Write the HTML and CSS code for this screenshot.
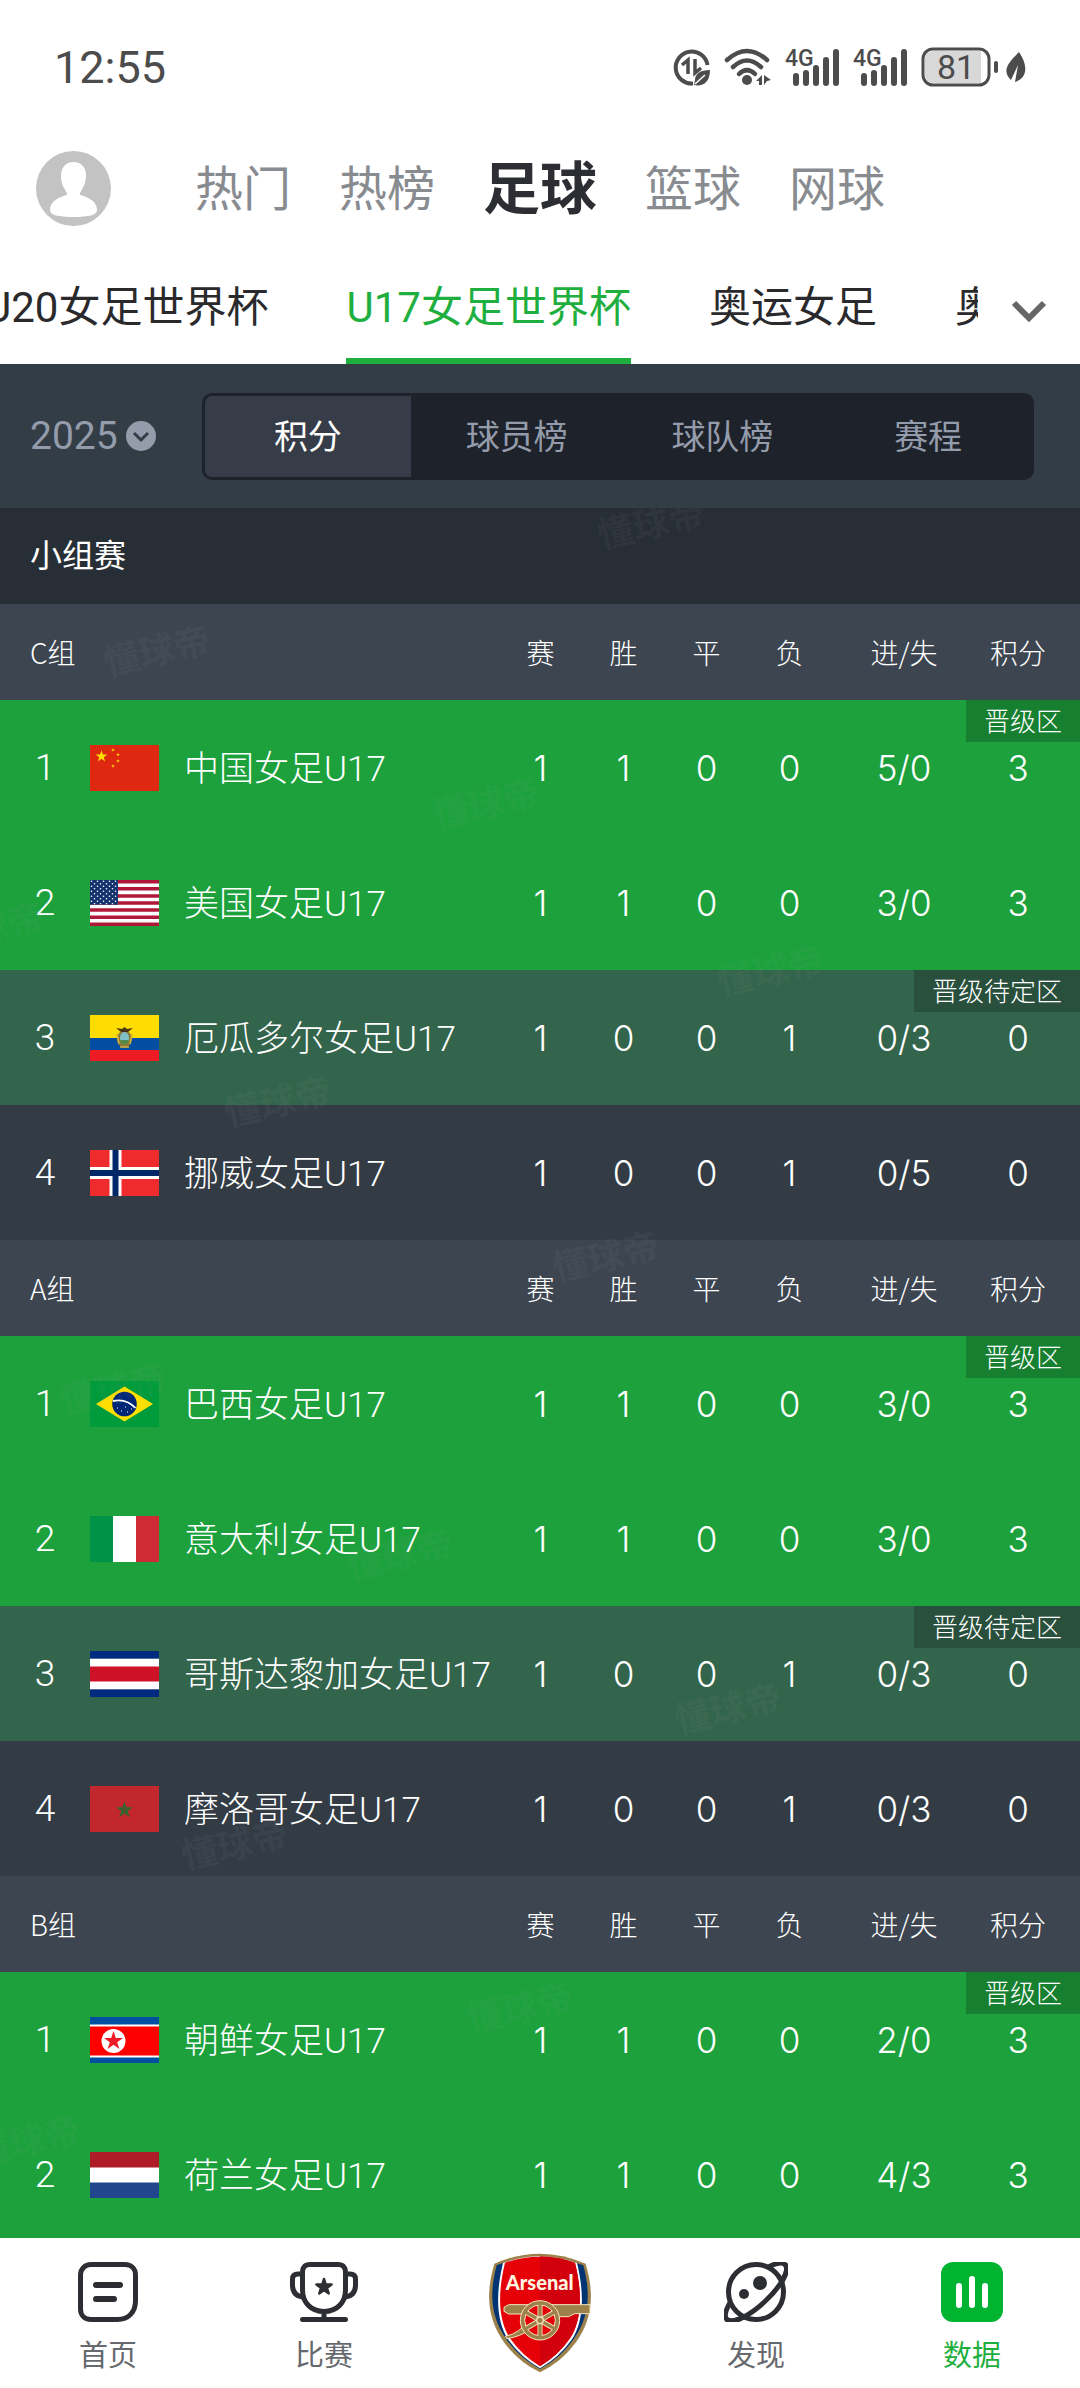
FILE: index.html
```html
<!DOCTYPE html>
<html lang="zh-CN">
<head>
    <meta charset="UTF-8">
    <meta name="viewport" content="width=device-width, initial-scale=1.0">
    <title>U17女足世界杯</title>
    <link rel="stylesheet" href="styles.css">
</head>
<body>
<!-- shared flag drawings -->
<svg class="defs" width="0" height="0" aria-hidden="true">
    <defs>
        <polygon id="star" points="0,-10 2.3,-3.1 9.5,-3.1 3.7,1.2 5.9,8.1 0,3.8 -5.9,8.1 -3.7,1.2 -9.5,-3.1 -2.3,-3.1"/>
        <pattern id="usstars" width="6" height="5" patternUnits="userSpaceOnUse">
            <circle cx="1.5" cy="1.3" r="0.8" fill="#fff"/>
            <circle cx="4.5" cy="3.8" r="0.8" fill="#fff"/>
        </pattern>
    </defs>
</svg>

<div class="status">
    <span class="time">12:55</span>
    <div class="status-icons">
        <svg width="37" height="38" viewBox="0 0 37 38">
            <path d="M20 35.5A16 16 0 1 1 34.5 17" fill="none" stroke="#4c4c4c" stroke-width="4"/>
            <path d="M9 17l6-5v14M22 11v14l6-5" fill="none" stroke="#4c4c4c" stroke-width="3.5"/>
            <path d="M37 22c-10 0-15 4-15 10l-1 5c8 2 16-2 16-15z" fill="#4c4c4c"/>
            <path d="M22 36l10-9" stroke="#fff" stroke-width="1.5"/>
        </svg>
        <svg width="47" height="38" viewBox="0 0 47 38">
            <g fill="none" stroke="#4c4c4c" stroke-width="4.5" stroke-linecap="round">
                <path d="M3 12Q23 -6 43 12"/>
                <path d="M9 19Q23 6 37 19"/>
                <path d="M15 26Q23 18 31 26"/>
            </g>
            <circle cx="23" cy="32" r="5" fill="#4c4c4c"/>
            <path d="M38 27v10h-3v-4h-3zM40 27l7 5-4 1-3 4z" fill="#4c4c4c"/>
        </svg>
        <svg width="54" height="38" viewBox="0 0 54 38">
            <text x="0" y="18" class="net">4G</text>
            <path d="M11 28v7M21 25v10M31 20v15M41 12v23M51 4v31" stroke="#4c4c4c" stroke-width="6" stroke-linecap="round"/>
        </svg>
        <svg width="54" height="38" viewBox="0 0 54 38">
            <text x="0" y="18" class="net">4G</text>
            <path d="M11 28v7M21 25v10M31 20v15M41 12v23M51 4v31" stroke="#4c4c4c" stroke-width="6" stroke-linecap="round"/>
        </svg>
        <svg width="105" height="40" viewBox="0 0 105 40">
            <rect x="2" y="2" width="66" height="36" rx="10" fill="#fff" stroke="#4c4c4c" stroke-width="3"/>
            <path d="M12 4h48v32H12a8 8 0 0 1-8-8V12a8 8 0 0 1 8-8z" fill="#d8d8d8"/>
            <rect x="73" y="14" width="4" height="12" rx="2" fill="#4c4c4c"/>
            <text x="35" y="32" class="battery">81</text>
            <path d="M98 5c9 13 9 26-4 30l3-17-7 15c-9-9-4-16 8-28z" fill="#4c4c4c"/>
        </svg>
    </div>
</div>

<header class="topbar">
    <a href="#" class="avatar" aria-label="我的">
        <svg viewBox="0 0 75 75">
            <circle cx="37.5" cy="37.5" r="37.5" fill="#c3c3c3"/>
            <path d="M37.5 11c8 0 13 6 12.500 14-.5 8-3 12-6 17v2c8 2 17 6 17 15 0 5-8 7-23.500 7S14 64 14 59c0-9 9-13 17-15v-2c-3-5-6-9-6-17s4.500-14 12.500-14z" fill="#fff"/>
        </svg>
    </a>
    <nav class="sports">
        <a href="#">热门</a>
        <a href="#">热榜</a>
        <a href="#" class="active">足球</a>
        <a href="#">篮球</a>
        <a href="#">网球</a>
    </nav>
</header>

<div class="leagues">
    <div class="league-window">
        <nav class="league-list">
            <a href="#">U20女足世界杯</a>
            <a href="#" class="active">U17女足世界杯</a>
            <a href="#">奥运女足</a>
            <a href="#">奥运男足</a>
        </nav>
    </div>
    <button class="more" aria-label="展开">
        <svg width="36" height="24" viewBox="0 0 36 24"><path d="M3 4l15 15L33 4" fill="none" stroke="#666" stroke-width="6"/></svg>
    </button>
</div>

<div class="filter">
    <button class="season">2025
        <svg width="30" height="30" viewBox="0 0 30 30">
            <circle cx="15" cy="15" r="15" fill="#949cac"/>
            <path d="M8 12l7 7 7-7" fill="none" stroke="#333d46" stroke-width="3"/>
        </svg>
    </button>
    <div class="segment">
        <button class="active">积分</button>
        <button>球员榜</button>
        <button>球队榜</button>
        <button>赛程</button>
    </div>
</div>

<main>
    <h2>小组赛</h2>

    <table>
        <colgroup><col class="c-rank"><col class="c-flag"><col><col class="c-num"><col class="c-num"><col class="c-num"><col class="c-num"><col class="c-goal"><col class="c-pts"></colgroup>
        <thead>
            <tr><th colspan="3">C组</th><th>赛</th><th>胜</th><th>平</th><th>负</th><th>进/失</th><th>积分</th></tr>
        </thead>
        <tbody>
            <tr class="up">
                <td>1</td>
                <td><svg class="flag" viewBox="0 0 69 46"><rect width="69" height="46" fill="#de2910"/><g fill="#ffde00"><use href="#star" transform="translate(11.5 11.5) scale(.62)"/><use href="#star" transform="translate(23 5) scale(.2)"/><use href="#star" transform="translate(28 9.5) scale(.2)"/><use href="#star" transform="translate(28 16) scale(.2)"/><use href="#star" transform="translate(23 21) scale(.2)"/></g></svg></td>
                <td class="team">中国女足U17</td>
                <td>1</td><td>1</td><td>0</td><td>0</td><td>5/0</td>
                <td>3<span class="tag">晋级区</span></td>
            </tr>
            <tr class="up">
                <td>2</td>
                <td><svg class="flag" viewBox="0 0 69 46"><rect width="69" height="46" fill="#fff"/><path d="M0 1.8h69M0 8.8h69M0 15.9h69M0 23h69M0 30.1h69M0 37.2h69M0 44.2h69" stroke="#b0183a" stroke-width="3.5"/><rect width="28" height="24.7" fill="#14336e"/><rect width="28" height="24.7" fill="url(#usstars)"/></svg></td>
                <td class="team">美国女足U17</td>
                <td>1</td><td>1</td><td>0</td><td>0</td><td>3/0</td><td>3</td>
            </tr>
            <tr class="maybe">
                <td>3</td>
                <td><svg class="flag" viewBox="0 0 69 46"><rect width="69" height="46" fill="#ffdd00"/><rect y="23" width="69" height="12" fill="#034ea2"/><rect y="35" width="69" height="11" fill="#ed1c24"/><ellipse cx="34.5" cy="24" rx="7.5" ry="8.5" fill="#8a7a35"/><ellipse cx="34.5" cy="23" rx="4.5" ry="6" fill="#7fc0c8"/><path d="M30.5 25h8c0 3-2 4-4 4s-4-1-4-4z" fill="#4d8a45"/><path d="M26 13l6 1 2.500-2 2.500 2 6-1-5 4h-7z" fill="#4a3418"/><path d="M27 19l2 10M42 19l-2 10M30 32h9" stroke="#d9b43c" stroke-width="1.5"/></svg></td>
                <td class="team">厄瓜多尔女足U17</td>
                <td>1</td><td>0</td><td>0</td><td>1</td><td>0/3</td>
                <td>0<span class="tag">晋级待定区</span></td>
            </tr>
            <tr>
                <td>4</td>
                <td><svg class="flag" viewBox="0 0 69 46"><rect width="69" height="46" fill="#ef2b2d"/><path d="M25.5 0v46M0 23h69" stroke="#fff" stroke-width="12"/><path d="M25.5 0v46M0 23h69" stroke="#002868" stroke-width="6"/></svg></td>
                <td class="team">挪威女足U17</td>
                <td>1</td><td>0</td><td>0</td><td>1</td><td>0/5</td><td>0</td>
            </tr>
        </tbody>
    </table>

    <table>
        <colgroup><col class="c-rank"><col class="c-flag"><col><col class="c-num"><col class="c-num"><col class="c-num"><col class="c-num"><col class="c-goal"><col class="c-pts"></colgroup>
        <thead>
            <tr><th colspan="3">A组</th><th>赛</th><th>胜</th><th>平</th><th>负</th><th>进/失</th><th>积分</th></tr>
        </thead>
        <tbody>
            <tr class="up">
                <td>1</td>
                <td><svg class="flag" viewBox="0 0 69 46"><rect width="69" height="46" fill="#009b3a"/><path d="M34.5 5.500L63 23 34.500 40.500 6 23z" fill="#fedf00"/><circle cx="34.5" cy="23" r="12.3" fill="#002776"/><path d="M23 20q13-3 22.500 7" fill="none" stroke="#fff" stroke-width="1.8"/><path d="M27 27h1M31 30h1M35 26h1M37 31h1M41 28h1" stroke="#fff"/></svg></td>
                <td class="team">巴西女足U17</td>
                <td>1</td><td>1</td><td>0</td><td>0</td><td>3/0</td>
                <td>3<span class="tag">晋级区</span></td>
            </tr>
            <tr class="up">
                <td>2</td>
                <td><svg class="flag" viewBox="0 0 69 46"><rect width="69" height="46" fill="#fff"/><rect width="23" height="46" fill="#009246"/><rect x="46" width="23" height="46" fill="#ce2b37"/></svg></td>
                <td class="team">意大利女足U17</td>
                <td>1</td><td>1</td><td>0</td><td>0</td><td>3/0</td><td>3</td>
            </tr>
            <tr class="maybe">
                <td>3</td>
                <td><svg class="flag" viewBox="0 0 69 46"><rect width="69" height="46" fill="#002b7f"/><rect y="7.7" width="69" height="30.6" fill="#fff"/><rect y="15.5" width="69" height="15" fill="#ce1126"/></svg></td>
                <td class="team">哥斯达黎加女足U17</td>
                <td>1</td><td>0</td><td>0</td><td>1</td><td>0/3</td>
                <td>0<span class="tag">晋级待定区</span></td>
            </tr>
            <tr>
                <td>4</td>
                <td><svg class="flag" viewBox="0 0 69 46"><rect width="69" height="46" fill="#c1272d"/><use href="#star" transform="translate(34.5 24) scale(.6)" fill="#56502c" stroke="#35632f" stroke-width="3"/></svg></td>
                <td class="team">摩洛哥女足U17</td>
                <td>1</td><td>0</td><td>0</td><td>1</td><td>0/3</td><td>0</td>
            </tr>
        </tbody>
    </table>

    <table>
        <colgroup><col class="c-rank"><col class="c-flag"><col><col class="c-num"><col class="c-num"><col class="c-num"><col class="c-num"><col class="c-goal"><col class="c-pts"></colgroup>
        <thead>
            <tr><th colspan="3">B组</th><th>赛</th><th>胜</th><th>平</th><th>负</th><th>进/失</th><th>积分</th></tr>
        </thead>
        <tbody>
            <tr class="up">
                <td>1</td>
                <td><svg class="flag" viewBox="0 0 69 46"><rect width="69" height="46" fill="#024fa2"/><rect y="7.5" width="69" height="33" fill="#fff"/><rect y="9.5" width="69" height="29" fill="#fe0000"/><circle cx="23.5" cy="24" r="12" fill="#fff"/><use href="#star" transform="translate(23.5 24)" fill="#ed1c27"/></svg></td>
                <td class="team">朝鲜女足U17</td>
                <td>1</td><td>1</td><td>0</td><td>0</td><td>2/0</td>
                <td>3<span class="tag">晋级区</span></td>
            </tr>
            <tr class="up">
                <td>2</td>
                <td><svg class="flag" viewBox="0 0 69 46"><rect width="69" height="46" fill="#fff"/><rect width="69" height="15.5" fill="#ae1c28"/><rect y="30.5" width="69" height="15.5" fill="#21468b"/></svg></td>
                <td class="team">荷兰女足U17</td>
                <td>1</td><td>1</td><td>0</td><td>0</td><td>4/3</td><td>3</td>
            </tr>
        </tbody>
    </table>

    <!-- watermark -->
    <svg class="watermark" width="1080" height="1730" aria-hidden="true">
        <text transform="translate(650 13) rotate(-13)">懂球帝</text>
        <text transform="translate(156 140) rotate(-13)">懂球帝</text>
        <text transform="translate(485 293) rotate(-13)">懂球帝</text>
        <text transform="translate(-10 417) rotate(-13)">懂球帝</text>
        <text transform="translate(770 460) rotate(-13)">懂球帝</text>
        <text transform="translate(277 591) rotate(-13)">懂球帝</text>
        <text transform="translate(605 746) rotate(-13)">懂球帝</text>
        <text transform="translate(112 878) rotate(-13)">懂球帝</text>
        <text transform="translate(399 1044) rotate(-13)">懂球帝</text>
        <text transform="translate(727 1198) rotate(-13)">懂球帝</text>
        <text transform="translate(234 1334) rotate(-13)">懂球帝</text>
        <text transform="translate(519 1497) rotate(-13)">懂球帝</text>
        <text transform="translate(26 1630) rotate(-13)">懂球帝</text>
    </svg>
</main>

<nav class="bottom">
    <a href="#">
        <svg width="60" height="60" viewBox="0 0 60 60" fill="none" stroke="#2d2e33" stroke-linecap="round">
            <path d="M13 2.500h34c6 0 10.500 4 10.500 10.500v26c0 11-7 18.500-18 18.500H13C6.500 57.500 2.500 53 2.500 47V13C2.500 7 7 2.500 13 2.500z" stroke-width="5"/>
            <path d="M18 23h24M18 37h18" stroke-width="6"/>
        </svg>
        首页
    </a>
    <a href="#">
        <svg width="68" height="60" viewBox="0 0 68 60" fill="none" stroke="#2d2e33" stroke-width="5" stroke-linecap="round">
            <path d="M20 2.500h28c5 0 7.500 3 7.500 7.500v18c0 13-9 21.500-21.500 21.500S12.500 41 12.500 28V10c0-4.500 2.500-7.500 7.500-7.500zM34 50v7M12.500 57.500h43"/>
            <path d="M12 12H8c-4 0-5.500 2-5.500 5v6c0 7 4 11 10 12M56 12h4c4 0 5.500 2 5.500 5v6c0 7-4 11-10 12"/>
            <use href="#star" transform="translate(34 25) scale(.8)" fill="#2d2e33" stroke-width="3" stroke-linejoin="round"/>
        </svg>
        比赛
    </a>
    <a href="#" class="club" aria-label="Arsenal">
        <svg width="102" height="120" viewBox="57 38 306 360">
            <path d="M73 70Q210 10 347 70C376 170 364 240 318 306Q275 365 210 396Q145 365 102 306C56 240 44 170 73 70z" fill="#9c824a"/>
            <path d="M80 75Q210 22 340 75C365 170 354 236 310 298Q270 354 210 386Q150 354 110 298C66 236 55 170 80 75z" fill="#023474"/>
            <path d="M99 68Q210 28 321 68C346 170 338 250 305 298Q268 350 210 384Q152 350 115 298C82 250 74 170 99 68z" fill="#fff"/>
            <path d="M105 67Q210 31 315 67C340 170 332 244 300 294Q265 345 210 378Q155 345 120 294C88 244 80 170 105 67z" fill="#e60008"/>
            <path d="M210 48Q265 49 315 67C340 170 332 244 300 294Q265 345 210 378z" fill="#d2000c"/>
            <g fill="#9c824a" stroke="#f5e6c0" stroke-width="3">
                <path d="M116 193h244v27h-46l-18 9h-36l-40 -8H116l-14-8v-12z"/>
                <path d="M178 235Q150 280 106 288l4 7Q150 290 186 264z"/>
                <circle cx="210" cy="240" r="59"/>
            </g>
            <circle cx="210" cy="240" r="46" fill="#e60008" stroke="#f5e6c0" stroke-width="3"/>
            <path d="M210 194v92M170 217l80 46M170 263l80-46" stroke="#f5e6c0" stroke-width="15"/>
            <path d="M210 192v96M168 216l84 48M168 264l84-48" stroke="#9c824a" stroke-width="10"/>
            <circle cx="210" cy="240" r="10" fill="#9c824a" stroke="#f5e6c0" stroke-width="4"/>
            <text x="209" y="149" class="crest-name">Arsenal</text>
        </svg>
    </a>
    <a href="#">
        <svg width="64" height="60" viewBox="0 0 64 60" fill="none" stroke="#2d2e33" stroke-width="5">
            <ellipse cx="32" cy="30" rx="40" ry="13" transform="rotate(-43 32 30)"/>
            <circle cx="32" cy="30" r="27.5" fill="#fff"/>
            <path d="M-8 30a40 13 0 0 0 80 0" transform="rotate(-43 32 30)"/>
            <circle cx="36" cy="21" r="7" fill="#2d2e33" stroke="none"/>
            <circle cx="20" cy="32" r="5" fill="#2d2e33" stroke="none"/>
        </svg>
        发现
    </a>
    <a href="#" class="active">
        <svg width="62" height="60" viewBox="0 0 62 60">
            <rect width="62" height="60" rx="12" fill="#00b432"/>
            <path d="M18 24v19M31 17v26M44 24v19" stroke="#fff" stroke-width="6" stroke-linecap="round"/>
        </svg>
        数据
    </a>
</nav>
</body>
</html>
```
FILE: styles.css
```css
* {
    box-sizing: border-box;
}

body {
    margin: 0;
    height: 100vh;
    display: flex;
    flex-direction: column;
    overflow: hidden;
    background-color: #fff;
    font-family: Roboto, "Noto Sans CJK SC", sans-serif;
}

a {
    color: inherit;
    text-decoration: none;
}

button {
    padding: 0;
    border: none;
    background: none;
    color: inherit;
    font-family: inherit;
}

svg {
    display: block;
}

.defs {
    position: absolute;
}

/* status bar */
.status {
    flex: none;
    display: flex;
    align-items: center;
    justify-content: space-between;
    height: 134px;
    padding: 0 54px;
    color: #4c4c4c;
}

.time {
    font-size: 45px;
}

.status-icons {
    display: flex;
    align-items: center;
    gap: 14px;
}

.status-icons svg {
    overflow: visible;
}

.net {
    font-size: 23px;
    font-weight: 500;
    fill: #4c4c4c;
}

.battery {
    font-size: 34px;
    text-anchor: middle;
    fill: #4c4c4c;
}

/* sports tabs */
.topbar {
    flex: none;
    display: flex;
    align-items: center;
    height: 109px;
    padding-left: 36px;
}

.avatar {
    width: 75px;
    margin-right: 84px;
}

.sports {
    display: flex;
    align-items: center;
    gap: 48px;
    padding-top: 3px;
    font-size: 48px;
    line-height: 64px;
    color: #888c91;
}

.sports .active {
    font-size: 57px;
    font-weight: bold;
    color: #2d2e33;
}

/* league tabs */
.leagues {
    flex: none;
    display: flex;
    height: 121px;
    font-size: 42px;
    color: #2a2a2c;
}

.league-window {
    flex: 1;
    overflow: hidden;
}

.league-list {
    display: flex;
    gap: 78px;
    height: 100%;
    margin-left: -16px;
    white-space: nowrap;
}

.league-list a {
    display: flex;
    align-items: center;
    padding-top: 6px;
    border-bottom: 6px solid transparent;
}

.league-list .active {
    color: #1faf3f;
    border-color: #1faf3f;
}

.more {
    display: flex;
    align-items: center;
    justify-content: center;
    width: 102px;
    padding-top: 14px;
}

/* season + segment */
.filter {
    flex: none;
    display: flex;
    align-items: center;
    height: 144px;
    padding: 0 46px 0 30px;
    background-color: #333d46;
}

.season {
    display: flex;
    align-items: center;
    gap: 8px;
    width: 172px;
    font-size: 39px;
    color: #949cac;
}

.segment {
    flex: 1;
    display: flex;
    height: 87px;
    border: 3px solid #1e222a;
    border-radius: 10px;
    overflow: hidden;
    background-color: #1e222a;
    color: #949cac;
}

.segment button {
    flex: 1;
    padding-bottom: 4px;
    font-size: 34px;
}

.segment .active {
    border-right: 3px solid #1e222a;
    background-color: #363c48;
    color: #fff;
}

/* standings */
main {
    flex: 1;
    min-height: 0;
    position: relative;
    overflow: hidden;
    background-color: #333c45;
    color: #fff;
}

h2 {
    margin: 0;
    padding-left: 30px;
    font-size: 32px;
    font-weight: normal;
    line-height: 96px;
    background-color: #272e35;
}

table {
    width: 100%;
    table-layout: fixed;
    border-collapse: collapse;
    text-align: center;
}

.c-rank {
    width: 90px;
}

.c-flag {
    width: 94px;
}

.c-num {
    width: 83px;
}

.c-goal {
    width: 146px;
}

.c-pts {
    width: 103px;
}

th {
    height: 96px;
    padding: 0;
    font-family: "Noto Sans CJK SC", sans-serif;
    font-size: 28px;
    font-weight: 300;
    background-color: #3d4650;
}

th:first-child {
    padding-left: 30px;
    text-align: left;
}

td {
    height: 135px;
    padding: 0;
    font-family: Inter, sans-serif;
    font-size: 35px;
    font-weight: 300;
}

td:first-child {
    font-family: Roboto, sans-serif;
    font-size: 37px;
}

th:last-child,
td:last-child {
    padding-right: 21px;
    position: relative;
}

.team {
    padding-bottom: 4px;
    font-family: Roboto, "Noto Sans CJK SC", sans-serif;
    text-align: left;
    white-space: nowrap;
}

.flag {
    width: 69px;
    height: 46px;
}

.up {
    background-color: #1ca13d;
}

.maybe {
    background-color: #33644c;
}

.tag {
    position: absolute;
    top: 0;
    right: 0;
    padding: 0 18px 2px;
    font-family: "Noto Sans CJK SC", sans-serif;
    font-size: 26px;
    line-height: 40px;
    white-space: nowrap;
    background-color: rgba(0, 0, 0, 0.2);
}

.watermark {
    position: absolute;
    top: 0;
    left: 0;
    pointer-events: none;
}

.watermark text {
    font-family: "Noto Sans CJK SC", sans-serif;
    font-size: 36px;
    font-weight: bold;
    text-anchor: middle;
    dominant-baseline: central;
    fill: #aaa;
    fill-opacity: 0.08;
}

/* bottom nav */
.bottom {
    flex: none;
    display: flex;
    height: 150px;
    background-color: #fff;
    color: #66696e;
    font-size: 29px;
    line-height: 40px;
}

.bottom a {
    flex: 1;
    display: flex;
    flex-direction: column;
    align-items: center;
    gap: 14px;
    padding-top: 24px;
}

.bottom .club {
    padding-top: 15px;
}

.bottom .active {
    color: #1faf3f;
}

.crest-name {
    font-family: Lato, sans-serif;
    font-size: 60px;
    font-weight: 900;
    text-anchor: middle;
    fill: #fff6e0;
}
```
